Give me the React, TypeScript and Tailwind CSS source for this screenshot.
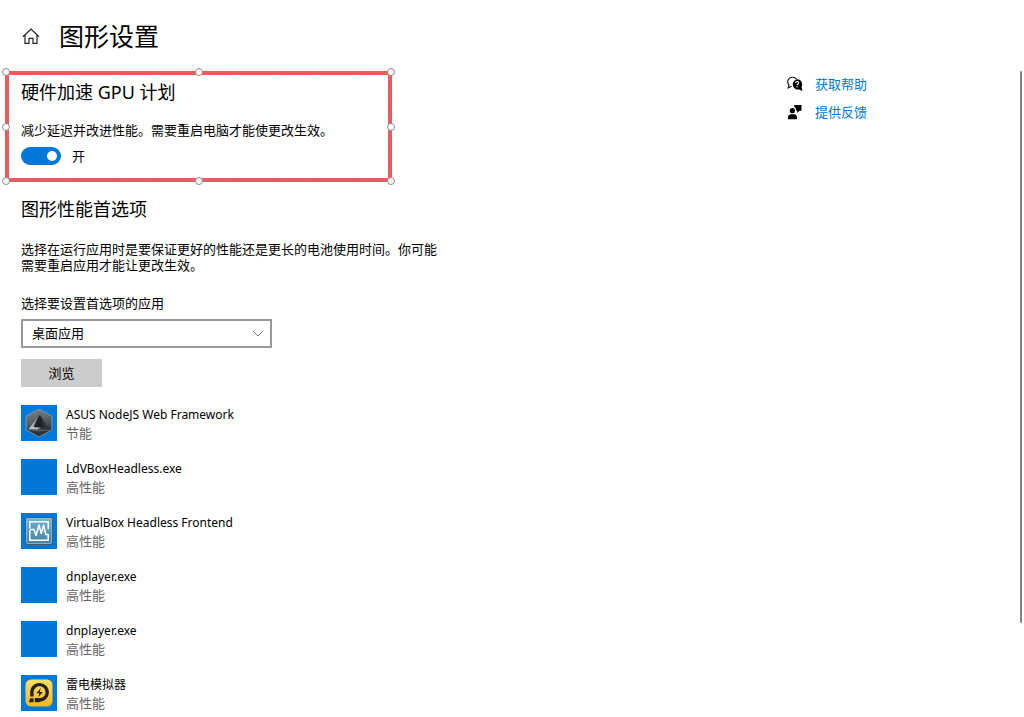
import React, { useState } from "react";

type AppEntry = {
  name: string;
  preference: string;
  icon?: React.ReactNode;
};

const HomeIcon = () => (
  <svg viewBox="0 0 18 18" className="h-[18px] w-[18px]" fill="none" stroke="#222" strokeWidth="1.2">
    <path d="M1 9.8 9 2l8 7.8" />
    <path d="M3 8.2v8.200h4V11.400h4v5h4V8.200" />
  </svg>
);

const HelpIcon = () => (
  <svg viewBox="0 0 16 16" className="h-4 w-4">
    <path
      d="M4.600 10.200 1.200 12l.8-3.200A4.500 4.500 0 0 1 5.600 1.200c1.800 0 3.200.8 4 2"
      fill="none"
      stroke="#111"
      strokeWidth="1.100"
    />
    <path d="M10 3.200a5.200 5.200 0 0 1 4.600 7.600l.8 4.200-3.400-1.500A5.200 5.200 0 1 1 10 3.200Z" fill="#000" />
    <path
      d="M8.500 6.900c.1-1 .8-1.400 1.600-1.400s1.600.5 1.600 1.300c0 1.100-1.600 1.200-1.600 2.400M10.100 10.200v1.200"
      fill="none"
      stroke="#fff"
      strokeWidth="1.100"
    />
  </svg>
);

const FeedbackIcon = () => (
  <svg viewBox="0 0 16 16" className="h-4 w-4" fill="#000">
    <circle cx="5.400" cy="6.700" r="2.600" />
    <path d="M1 15.300v-1.800c0-2 1.500-3.200 3.200-3.200h2.600c1.800 0 3.200 1.200 3.200 3.200v1.800Z" />
    <path d="M7.200 1h7.300v5.800h-2L10.200 9V6.800h-1c.1-2-.6-3.200-2-3.900Z" />
  </svg>
);

const AsusIcon = () => (
  <svg viewBox="0 0 28 28" className="h-[30px] w-[30px]">
    <defs>
      <linearGradient id="hex" x1="0" y1="0" x2="0.2" y2="1">
        <stop offset="0" stopColor="#78848b" />
        <stop offset="0.5" stopColor="#56616a" />
        <stop offset="1" stopColor="#20262c" />
      </linearGradient>
      <linearGradient id="face" x1="0.5" y1="0" x2="0.3" y2="1">
        <stop offset="0" stopColor="#5c6870" />
        <stop offset="1" stopColor="#c2cbd0" />
      </linearGradient>
    </defs>
    <path d="M14 1 26 7.500v13L14 27 2 20.500v-13Z" fill="url(#hex)" stroke="#8f9aa1" strokeWidth="0.8" />
    <path d="M13.500 7 4.500 19.500l8 .5 3-1.500-6-.5Z" fill="url(#face)" />
    <path d="m14.500 6.500-5.500 11 8 .5 1.500 2.500 4.500-1Z" fill="#1b2025" />
    <path d="m15 6.500 8.500 13-5 1.200Z" fill="#2a3138" />
    <path d="m4 20 9.500 1.500 10.500-1.300L14 26Z" fill="#2d343b" />
    <path d="m4 20 9.500 1.300 10.500-1" fill="none" stroke="#7d8991" strokeWidth="0.6" />
  </svg>
);

const VirtualBoxIcon = () => (
  <svg viewBox="0 0 28 28" className="h-7 w-7">
    <defs>
      <linearGradient id="vbox" x1="0" y1="0" x2="0" y2="1">
        <stop offset="0" stopColor="#6fb4d8" />
        <stop offset="1" stopColor="#477f9f" />
      </linearGradient>
    </defs>
    <rect x="0.500" y="0.500" width="27" height="27" rx="2" fill="url(#vbox)" stroke="#315d7c" />
    <rect x="1.500" y="1.500" width="25" height="25" rx="1.500" fill="none" stroke="#94c9e5" strokeWidth="0.7" />
    <path d="M4.800 11.500V4.800h18.400v7.500M23.200 17v6.200H4.800v-10" fill="none" stroke="#fff" strokeWidth="1.500" />
    <path
      d="M5 12.500h4l2 6 3-10.500 2.300 8.500L18.600 8l2.200 9.500h2.600"
      fill="none"
      stroke="#fff"
      strokeWidth="1.500"
      strokeLinejoin="round"
    />
  </svg>
);

const LdPlayerIcon = () => (
  <svg viewBox="0 0 28 28" className="h-7 w-7">
    <defs>
      <linearGradient id="ld" x1="0" y1="0" x2="0" y2="1">
        <stop offset="0" stopColor="#ffe066" />
        <stop offset="1" stopColor="#f9b51c" />
      </linearGradient>
    </defs>
    <rect x="0.500" y="0.500" width="27" height="27" rx="5.500" fill="url(#ld)" />
    <path d="M6.900 17.500V12.500a7.700 7.700 0 1 1 7.700 8.500H10" fill="none" stroke="#222" strokeWidth="3.400" />
    <path d="M5.200 19.200h3.300v4H4Z" fill="#222" />
    <path d="M9.700 19.200h5v4h-5Z" fill="#222" />
    <path d="m15.800 9-4.500 5.200h3l-1 4 4.500-5.200h-3Z" fill="#222" />
  </svg>
);

const apps: AppEntry[] = [
  { name: "ASUS NodeJS Web Framework", preference: "节能", icon: <AsusIcon /> },
  { name: "LdVBoxHeadless.exe", preference: "高性能" },
  { name: "VirtualBox Headless Frontend", preference: "高性能", icon: <VirtualBoxIcon /> },
  { name: "dnplayer.exe", preference: "高性能" },
  { name: "dnplayer.exe", preference: "高性能" },
  { name: "雷电模拟器", preference: "高性能", icon: <LdPlayerIcon /> },
];

// Resize handles around the highlighted section
const handles = [
  "left-0 top-0",
  "left-1/2 top-0",
  "left-full top-0",
  "left-0 top-1/2",
  "left-full top-1/2",
  "left-0 top-full",
  "left-1/2 top-full",
  "left-full top-full",
];

const App: React.FC = () => {
  const [accelerated, setAccelerated] = useState(true);

  return (
    <div className="flex min-h-screen bg-white font-['Noto_Sans','Noto_Sans_CJK_SC',sans-serif] text-[13px] leading-4 text-black">
      <main className="min-w-0 flex-1 pb-1">
        <header className="flex h-[71px] items-center gap-[19px] pl-[22px]">
          <a href="#home" aria-label="主页">
            <HomeIcon />
          </a>
          <h1 className="text-[25px] leading-8">图形设置</h1>
        </header>

        {/* Hardware acceleration */}
        <section className="relative ml-[5px] max-w-[387px] border-4 border-[#f0595c] pt-[5px] pr-3 pb-3 pl-3">
          <div className="pointer-events-none absolute -inset-[3px] outline outline-dashed -outline-offset-2 outline-[#b87476]">
            {handles.map((position) => (
              <span
                key={position}
                className={`absolute h-2 w-2 -translate-1/2 rounded-full border border-[#8c8c8c] bg-white ${position}`}
              />
            ))}
          </div>
          <h2 className="text-[18px] leading-6">硬件加速 GPU 计划</h2>
          <p className="mt-[18px]">减少延迟并改进性能。需要重启电脑才能使更改生效。</p>
          <label className="mt-2 flex h-5 items-center gap-[11px]">
            <input
              type="checkbox"
              role="switch"
              checked={accelerated}
              onChange={(e) => setAccelerated(e.target.checked)}
              className="flex h-[18px] w-10 appearance-none items-center rounded-full bg-gray-400 px-1 before:h-[10px] before:w-[10px] before:rounded-full before:bg-white checked:justify-end checked:bg-[#0078d7]"
            />
            {accelerated ? "开" : "关"}
          </label>
        </section>

        {/* Per-app preference */}
        <section className="pt-[15px] pl-[21px]">
          <h2 className="text-[18px] leading-6">图形性能首选项</h2>
          <p className="mt-5 max-w-[420px]">
            选择在运行应用时是要保证更好的性能还是更长的电池使用时间。你可能需要重启应用才能让更改生效。
          </p>
          <label htmlFor="app-type" className="mt-[22px] block">
            选择要设置首选项的应用
          </label>
          <div className="relative mt-2 max-w-[251px]">
            <select
              id="app-type"
              className="block h-[29px] w-full appearance-none border-2 border-[#999] bg-white pr-8 pb-[2px] pl-[9px]"
            >
              <option>桌面应用</option>
              <option>Microsoft Store 应用</option>
            </select>
            <svg
              viewBox="0 0 12 8"
              className="pointer-events-none absolute top-[11px] right-2 h-2 w-3"
              fill="none"
              stroke="#777"
            >
              <path d="m1 1 5 5 5-5" />
            </svg>
          </div>
          <button className="mt-[11px] block h-7 w-[81px] bg-[#ccc]">浏览</button>

          <ul className="mt-[18px] flex flex-col gap-[18px]">
            {apps.map((app, index) => (
              <li key={index} className="flex gap-[9px]">
                <div className="flex h-9 w-9 items-center justify-center bg-[#0078d7]">{app.icon}</div>
                <div>
                  <p className="text-[12px] leading-5">{app.name}</p>
                  <p className="text-[#666]">{app.preference}</p>
                </div>
              </li>
            ))}
          </ul>
        </section>
      </main>

      <aside className="flex w-[237px] justify-between pt-[71px] pr-[2px]">
        <nav className="flex flex-col gap-3 pt-[5px] text-[#0078d7]">
          <a href="#help" className="flex items-center gap-3">
            <HelpIcon />
            获取帮助
          </a>
          <a href="#feedback" className="flex items-center gap-3">
            <FeedbackIcon />
            提供反馈
          </a>
        </nav>
        {/* Scroll thumb */}
        <div className="h-[77vh] w-[2px] rounded-full bg-[#858585]" />
      </aside>
    </div>
  );
};

export default App;
